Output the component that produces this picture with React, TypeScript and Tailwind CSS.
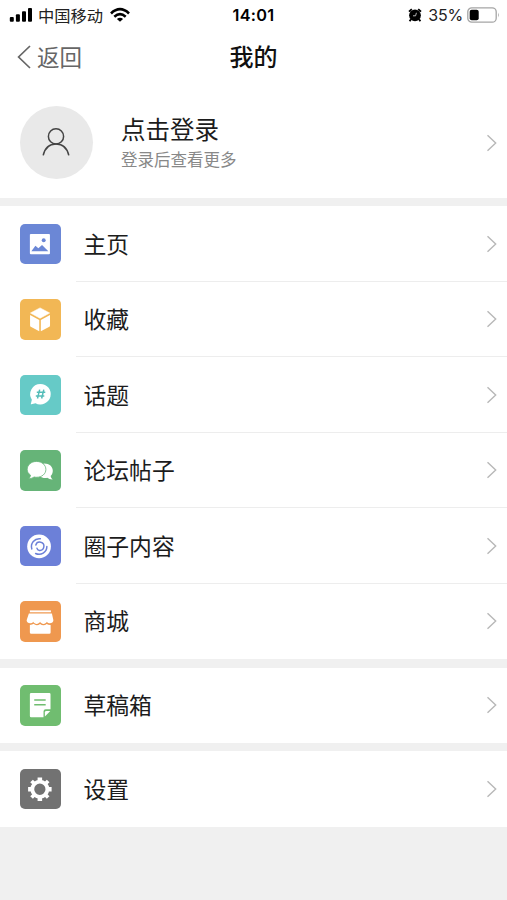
import type { ReactNode } from 'react';

interface MenuItem {
  label: string;
  color: string;
  icon: ReactNode;
}

const mainItems: MenuItem[] = [
  {
    label: '主页',
    color: 'bg-[#6b87d6]',
    icon: (
      <>
        <rect x="10" y="10" width="20.3" height="20.5" rx="1" fill="#fff" />
        <path d="M11.5 27.7 15.6 22l3 2.6 3.7-3.3 6.4 6.4z" fill="#6b87d6" />
        <circle cx="24" cy="16.4" r="2" fill="#6b87d6" />
      </>
    ),
  },
  {
    label: '收藏',
    color: 'bg-[#f2b755]',
    icon: (
      <>
        <path d="M20.3 9 30 14.2 20.3 19.5 10.6 14.2z" fill="#fff" stroke="#fff" strokeWidth="0.6" strokeLinejoin="round" />
        <path d="M10.2 16.3 19.5 21.2V32.7L10.9 28Q10.2 27.6 10.2 26.8z" fill="#fff" />
        <path d="M30.4 16.3 21.1 21.2V32.7L29.7 28Q30.4 27.6 30.4 26.8z" fill="#fff" />
      </>
    ),
  },
  {
    label: '话题',
    color: 'bg-[#66cac7]',
    icon: (
      <>
        <path d="M20.7 9A10.4 10.4 0 1 1 15.7 28.5L11.5 29.7Q10.6 29.8 11 29L12 25A10.4 10.4 0 0 1 20.7 9z" fill="#fff" />
        <path d="M19.9 14.8 17.7 23.8M24.1 14.8 21.9 23.8M17 17.5H25.6M16 21.2H24.6" stroke="#55bdb9" strokeWidth="1.5" fill="none" />
      </>
    ),
  },
  {
    label: '论坛帖子',
    color: 'bg-[#66b478]',
    icon: (
      <>
        <path d="M24 13.6C29.6 13.4 33.2 16.6 33.2 21C33.2 23.2 32.4 25 31 26.3Q31.4 28.5 33 29.8Q29.8 29.9 27.6 28.1C24.7 28.7 22 28 20 26.5z" fill="#fff" />
        <path d="M16.7 11.6C22.2 11.6 26.2 15.2 26.2 19.7C26.2 24.2 22.2 27.6 16.7 27.6Q15.5 27.6 14.4 27.3Q12 29.1 8.8 28.8Q10.4 27.6 10.7 25.5C8.6 24.1 7.3 22 7.3 19.7C7.3 15.2 11.3 11.6 16.7 11.6z" fill="#fff" stroke="#66b478" strokeWidth="0.8" />
      </>
    ),
  },
  {
    label: '圈子内容',
    color: 'bg-[#6c80d8]',
    icon: (
      <>
        <circle cx="19.3" cy="20.7" r="12" fill="#fff" />
        <g stroke="#6c80d8" strokeWidth="1.5" fill="none" strokeLinecap="round">
          <path d="M20.6 12.9A7.9 7.9 0 0 0 12 23.2" />
          <path d="M15.8 27.8A7.9 7.9 0 0 0 27.2 20.7" />
          <path d="M16 19.2A4.2 4.2 0 1 1 19.6 24.7Q17.6 24.5 17.2 22.6" />
        </g>
      </>
    ),
  },
  {
    label: '商城',
    color: 'bg-[#ef984f]',
    icon: (
      <>
        <path d="M10 9.5H31.3V11.4H10z" fill="#fff" />
        <path d="M9 12.7H32.3L33.8 19.6C33.8 23 28.7 23.6 27.2 21C25.8 23.9 21.7 23.9 20.3 21C18.9 23.9 14.8 23.9 13.4 21C11.9 23.6 6.7 23 6.7 19.6z" fill="#fff" />
        <path d="M10 24.2Q12.6 24 13.7 23.1Q16.8 25.8 20.3 23.3Q23.8 25.8 27.1 23.2Q28.6 24.3 31 24.2V31.8Q31 33.2 29.6 33.2H11.4Q10 33.2 10 31.8z" fill="#fff" />
      </>
    ),
  },
];

const draftItems: MenuItem[] = [
  {
    label: '草稿箱',
    color: 'bg-[#70bd70]',
    icon: (
      <>
        <path d="M11.2 8.2H29.7Q30.9 8.2 30.9 9.4V24.6H26Q23.8 24.6 23.8 26.8V32.6H11.2Q10 32.6 10 31.4V9.4Q10 8.2 11.2 8.2z" fill="#fff" />
        <path d="M30.7 26.2 25.2 32V27.7Q25.2 26.2 26.7 26.2z" fill="#fff" />
        <path d="M14.4 15.1H26M14.4 20.1H26" stroke="#70bd70" strokeWidth="1.5" />
      </>
    ),
  },
];

const settingItems: MenuItem[] = [
  {
    label: '设置',
    color: 'bg-[#727272]',
    icon: (
      <>
        <circle cx="20.1" cy="20.5" r="7.6" fill="none" stroke="#fff" strokeWidth="3.8" />
        <g stroke="#fff" strokeWidth="4.6">
          <path d="M20.1 8.6V13M20.1 28V32.4M8.2 20.5H12.6M27.6 20.5H32" />
          <path d="M11.7 12.1 14.8 15.2M25.4 25.8 28.5 28.9M28.5 12.1 25.4 15.2M14.8 25.8 11.7 28.9" strokeWidth="3.8" />
        </g>
      </>
    ),
  },
];

function Arrow() {
  return (
    <svg className="mr-[10px] h-[18px] w-[11px] shrink-0" viewBox="0 0 11 18" fill="none">
      <path d="M1.5 1.2 9.7 9 1.5 16.8" stroke="#b8b8b8" strokeWidth="1.4" />
    </svg>
  );
}

function MenuGroup({ items }: { items: MenuItem[] }) {
  return (
    <div className="bg-white">
      {items.map((item, i) => (
        <div key={item.label} className="flex h-[75.5px] items-center pl-5">
          <div className={`h-[40.5px] w-[40.5px] shrink-0 rounded-[5px] ${item.color}`}>
            <svg className="h-[40.5px] w-[40.5px]" viewBox="0 0 41 41">
              {item.icon}
            </svg>
          </div>
          <div
            className={`ml-[15.5px] flex h-full flex-1 items-center justify-between border-b pl-[7.5px] ${
              i < items.length - 1 ? 'border-[#ededed]' : 'border-transparent'
            }`}
          >
            <span className="text-[22.8px] leading-8 text-[#1c1c1c]">{item.label}</span>
            <Arrow />
          </div>
        </div>
      ))}
    </div>
  );
}

function StatusBar() {
  return (
    <div className="grid h-[30px] grid-cols-[1fr_auto_1fr] items-center pr-[7px] pl-[9px] text-black">
      <div className="flex items-center">
        <svg className="h-4 w-6" viewBox="0 0 24 16">
          <rect x="0.8" y="10" width="4" height="4.7" rx="1" />
          <rect x="6.9" y="7.3" width="4" height="7.4" rx="1" />
          <rect x="13" y="4.2" width="4" height="10.5" rx="1" />
          <rect x="19" y="1" width="4" height="13.7" rx="1" />
        </svg>
        <span className="ml-[5px] text-[16.3px] leading-6 text-[#222]">中国移动</span>
        <svg className="ml-[7px] h-4 w-5" viewBox="0 0 20 16" fill="none">
          <path d="M1 6.4Q10-2 19 6.4" stroke="#000" strokeWidth="2.7" />
          <path d="M4.3 9.7Q10 4.7 15.7 9.7" stroke="#000" strokeWidth="2.6" />
          <path d="M10 14.8 6.9 12Q10 9.5 13.1 12z" fill="#000" />
        </svg>
      </div>
      <span className="mr-0.5 font-[Inter] text-[16.3px] leading-6 font-semibold tracking-[0.3px]">14:01</span>
      <div className="flex items-center justify-end">
        <svg className="h-[15px] w-[14px]" viewBox="0 0 14 15">
          <circle cx="7" cy="7.3" r="5.9" />
          <path d="M3 11.3 1.6 13.2M11 11.3 12.4 13.2M1 3.6 3.8 1.1M13 3.6 10.2 1.1" stroke="#000" strokeWidth="1.9" />
          <path d="M8.4 4.8 7.6 7.8H5" stroke="#ccc" strokeWidth="0.9" fill="none" />
        </svg>
        <span className="ml-[6px] font-[Inter] text-[16px] leading-6 tracking-[-0.2px] text-[#222]">35%</span>
        <svg className="ml-1 h-4 w-[33px]" viewBox="0 0 33 16">
          <rect x="0.8" y="0.8" width="28.4" height="14.4" rx="4" fill="#fff" stroke="#a5a5a5" strokeWidth="1.3" />
          <rect x="2.7" y="2.8" width="9" height="10.4" rx="2" />
          <path d="M31 5.6Q32.7 8 31 10.4z" fill="#a5a5a5" />
        </svg>
      </div>
    </div>
  );
}

export default function App() {
  return (
    <div className="h-[900px] w-[507px] overflow-hidden bg-[#f0f0f0] font-['Noto_Sans_CJK_SC',sans-serif]">
      <div className="h-[198px] bg-white">
        <StatusBar />

        {/* Nav bar */}
        <div className="grid h-[52px] grid-cols-[1fr_auto_1fr] items-center">
          <div className="flex items-center pl-[17px] text-[#666]">
            <svg className="mt-0.5 h-6 w-[14px]" viewBox="0 0 14 24" fill="none">
              <path d="M13 1 1.6 12 13 23" stroke="#666" strokeWidth="1.7" />
            </svg>
            <span className="ml-[6px] text-[22.5px] leading-8">返回</span>
          </div>
          <h1 className="text-[24px] leading-8 font-medium text-[#111]">我的</h1>
        </div>

        {/* Profile */}
        <div className="flex h-[121px] items-center pl-5">
          <div className="flex h-[72.5px] w-[72.5px] items-center justify-center rounded-full bg-[#e9e9e9]">
            <svg className="h-[30px] w-[30px]" viewBox="0 0 30 30" fill="none" stroke="#444" strokeWidth="1.5">
              <circle cx="15" cy="8.4" r="7.6" />
              <path d="M2.2 27.4C3.8 19.9 8.5 15.9 15 15.9S26.2 19.9 27.8 27.4" />
            </svg>
          </div>
          <div className="ml-[28.5px] flex-1">
            <p className="text-[24.5px] leading-[34px] text-[#1c1c1c]">点击登录</p>
            <p className="text-[16.5px] leading-[27px] text-[#888]">登录后查看更多</p>
          </div>
          <Arrow />
        </div>
      </div>

      <div className="mt-[8.4px] space-y-[8.2px]">
        <MenuGroup items={mainItems} />
        <MenuGroup items={draftItems} />
        <MenuGroup items={settingItems} />
      </div>
    </div>
  );
}
